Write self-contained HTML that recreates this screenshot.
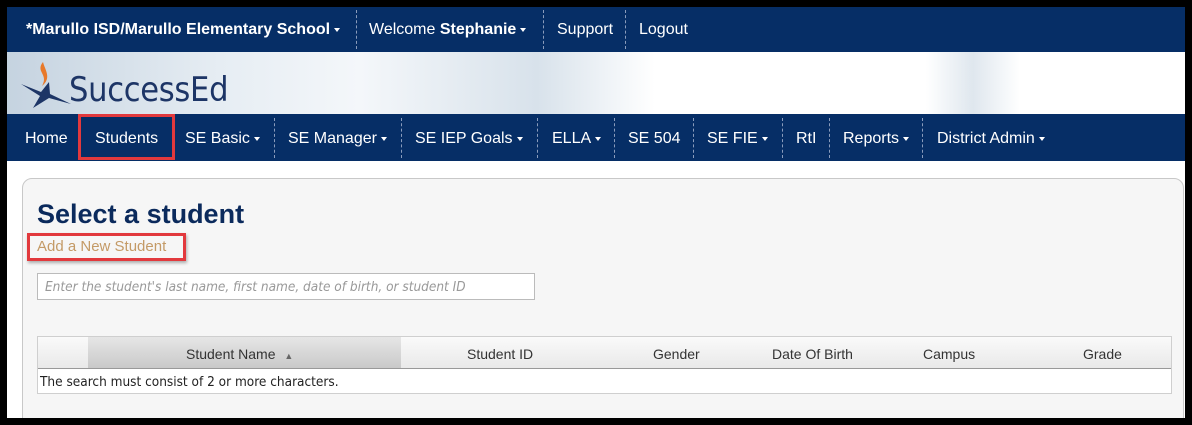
<!DOCTYPE html>
<html><head><style>
*{margin:0;padding:0;box-sizing:border-box}
body{width:1192px;height:425px;background:#000;position:relative;overflow:hidden;font-family:"Liberation Sans",sans-serif}
.abs{position:absolute}
#frame{left:7px;top:7px;width:1178px;height:411px;background:#fff;overflow:hidden}
.nav{left:0;width:1178px;background:#062e66;color:#fff;font-size:16px}
.nav span{position:absolute;white-space:nowrap}
.sep{position:absolute;width:0;border-left:1px dashed #8a9cbc}
.car{display:inline-block;border-left:3.5px solid transparent;border-right:3.5px solid transparent;border-top:4px solid #fff;vertical-align:middle;margin-left:4px}
</style></head><body>
<div id="frame" class="abs">
 <div class="abs nav" style="top:0;height:45px">
  <span style="left:19px;top:14px;font-weight:bold">*Marullo ISD/Marullo Elementary School<i class="car"></i></span>
  <div class="sep" style="left:349px;top:3px;height:39px"></div>
  <span style="left:362px;top:14px">Welcome <b>Stephanie</b><i class="car"></i></span>
  <div class="sep" style="left:536px;top:3px;height:39px"></div>
  <span style="left:550px;top:14px">Support</span>
  <div class="sep" style="left:618px;top:3px;height:39px"></div>
  <span style="left:632px;top:14px">Logout</span>
 </div>
 <div class="abs" style="top:45px;left:0;width:1178px;height:62px;background:linear-gradient(90deg,#c5d3e0 0%,#e6edf3 18%,#f4f7fa 30%,#d8e2eb 45%,#fff 55%,#fff 78%,#dfe7ee 82%,#fff 86%,#fff 100%)"></div>
 <svg class="abs" style="left:12px;top:53px" width="54" height="50" viewBox="0 0 54 50">
  <path d="M24 2 C16 12 30 14 23 26 C33 18 26 10 24 2Z" fill="#e8792a"/>
  <path d="M2 24 L22 32 L30 22 L31 34 L52 44 L30 38 L14 48 L21 36Z" fill="#1d3566"/>
 </svg>
 <div class="abs" style="left:62px;top:63px;font-size:34px;color:#1d3566;letter-spacing:-0.3px;font-family:'DejaVu Sans Condensed','Liberation Sans',sans-serif">SuccessEd</div>
 <div class="abs nav" style="top:107px;height:47px">
  <span style="left:18px;top:16px">Home</span>
  <span style="left:88px;top:16px">Students</span>
  <span style="left:178px;top:16px">SE Basic<i class="car"></i></span>
  <div class="sep" style="left:267px;top:4px;height:40px"></div>
  <span style="left:281px;top:16px">SE Manager<i class="car"></i></span>
  <div class="sep" style="left:394px;top:4px;height:40px"></div>
  <span style="left:408px;top:16px">SE IEP Goals<i class="car"></i></span>
  <div class="sep" style="left:530px;top:4px;height:40px"></div>
  <span style="left:545px;top:16px">ELLA<i class="car"></i></span>
  <div class="sep" style="left:607px;top:4px;height:40px"></div>
  <span style="left:621px;top:16px">SE 504</span>
  <div class="sep" style="left:686px;top:4px;height:40px"></div>
  <span style="left:700px;top:16px">SE FIE<i class="car"></i></span>
  <div class="sep" style="left:775px;top:4px;height:40px"></div>
  <span style="left:789px;top:16px">RtI</span>
  <div class="sep" style="left:822px;top:4px;height:40px"></div>
  <span style="left:836px;top:16px">Reports<i class="car"></i></span>
  <div class="sep" style="left:915px;top:4px;height:40px"></div>
  <span style="left:930px;top:16px">District Admin<i class="car"></i></span>
 </div>
 <div class="abs" style="left:71px;top:107px;width:97px;height:46px;border:3px solid #e2393d"></div>
 <div class="abs" style="left:15px;top:171px;width:1162px;height:260px;background:#f6f6f6;border:1px solid #c8c8c8;border-radius:10px"></div>
 <div class="abs" style="left:30px;top:192px;font-size:27px;font-weight:bold;color:#0b2a5c">Select a student</div>
 <div class="abs" style="left:30px;top:231px;font-size:15px;color:#c49a66">Add a New Student</div>
 <div class="abs" style="left:20px;top:226px;width:159px;height:28px;border:3px solid #e2393d;box-shadow:1px 2px 3px rgba(0,0,0,.3)"></div>
 <div class="abs" style="left:30px;top:266px;width:498px;height:27px;background:#fff;border:1px solid #bbb;font-style:italic;color:#999;padding:5px 7px;font-family:'DejaVu Sans Condensed','Liberation Sans',sans-serif;font-size:13.5px;white-space:nowrap;overflow:hidden">Enter the student's last name, first name, date of birth, or student ID</div>
 <div class="abs" style="left:30px;top:329px;width:1135px;height:58px;background:#fff;border:1px solid #cfcfcf"></div>
 <div class="abs" style="left:31px;top:330px;width:1133px;height:32px;background:linear-gradient(#fafafa,#e9e9e9);border-bottom:1px solid #999"></div>
 <div class="abs" style="left:81px;top:330px;width:313px;height:32px;background:linear-gradient(#e6e6e6,#c9c9c9);border-bottom:1px solid #999"></div>
 <div class="abs" style="top:339px;font-size:14px;color:#333;left:179px">Student Name <span style="font-size:9px;color:#666;margin-left:5px">▲</span></div>
 <div class="abs" style="top:339px;font-size:14px;color:#333;left:460px">Student ID</div>
 <div class="abs" style="top:339px;font-size:14px;color:#333;left:646px">Gender</div>
 <div class="abs" style="top:339px;font-size:14px;color:#333;left:765px">Date Of Birth</div>
 <div class="abs" style="top:339px;font-size:14px;color:#333;left:916px">Campus</div>
 <div class="abs" style="top:339px;font-size:14px;color:#333;left:1076px">Grade</div>
 <div class="abs" style="top:367px;left:33px;font-size:13.5px;color:#222;font-family:'DejaVu Sans Condensed','Liberation Sans',sans-serif">The search must consist of 2 or more characters.</div>
</div>
</body></html>
